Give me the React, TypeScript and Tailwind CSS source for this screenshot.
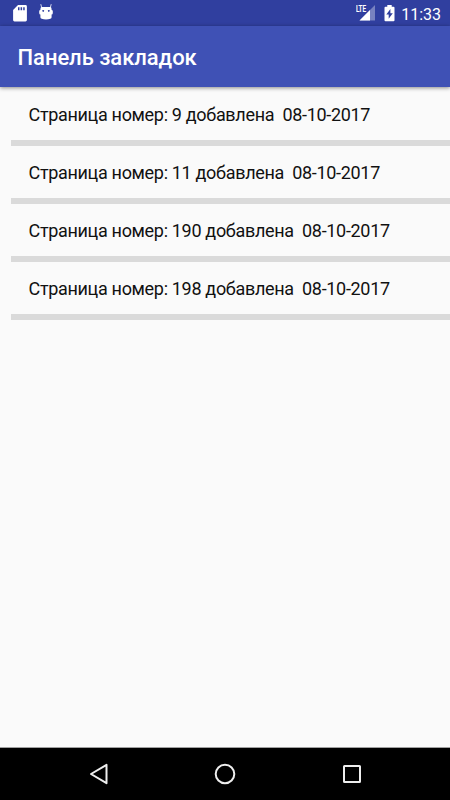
const bookmarks = [
  { page: 9, date: "08-10-2017" },
  { page: 11, date: "08-10-2017" },
  { page: 190, date: "08-10-2017" },
  { page: 198, date: "08-10-2017" },
];

function SdCardIcon() {
  return (
    <svg width="14" height="17" viewBox="0 0 14 17" fill="#fff">
      <path
        fillRule="evenodd"
        d="M5 0h7.5a1.4 1.4 0 0 1 1.4 1.4v13.7a1.4 1.4 0 0 1-1.4 1.4h-11A1.4 1.4 0 0 1 .1 15.1V5zM5 2.3v3h1.5v-3zm2.6 0v3h1.5v-3zm2.6 0v3h1.5v-3z"
      />
    </svg>
  );
}

function AndroidIcon() {
  return (
    <svg width="14" height="17" viewBox="0 0 14 17" fill="#fff" className="overflow-visible">
      <path d="M1.800 -.8l1 4M12.200 -.8l-1 4" stroke="#fff" strokeWidth="1" strokeOpacity=".8" />
      <path
        fillRule="evenodd"
        d="M3 2h8q1.600 0 1.600 2V5q1.200 0 1.200 1.200v1.800q0 1.500-1.200 1.500v2.800q0 1-1.300 1.500-2 .8-4.300.8t-4.300-.8Q1.400 13.300 1.400 12.300V9.500Q.2 9.500.2 8V6.200Q.2 5 1.400 5V4Q1.400 2 3 2zM4.200 4.900a.9.9 0 1 0 .01 0zM9.800 4.900a.9.9 0 1 0 .01 0z"
      />
    </svg>
  );
}

function SignalIcon() {
  return (
    <svg width="20" height="18" viewBox="0 0 20 18">
      <path d="M19 1v15.500H3.500z" fill="#fff" fillOpacity=".35" />
      <path d="M14 6v10.500H3.500z" fill="#fff" />
      <path d="M0 0h10.500v8.500H0z" fill="#303f9f" />
      <text
        x="0"
        y="7.800"
        fill="#fff"
        stroke="#fff"
        strokeWidth=".2"
        fontSize="9.500"
        fontWeight="500"
        textLength="10"
        lengthAdjust="spacingAndGlyphs"
      >
        LTE
      </text>
    </svg>
  );
}

function BatteryIcon() {
  return (
    <svg width="11" height="17" viewBox="0 0 11 17">
      <path d="M3.300 0h4.400v1.700h1.800q1 0 1 1v12.500q0 1-1 1h-8q-1 0-1-1V2.700q0-1 1-1h1.800z" fill="#fff" />
      <path d="M6.400 4L2.300 9.600h2.400v4.200L8.800 8.200H6.400z" fill="#303f9f" />
    </svg>
  );
}

function StatusBar() {
  return (
    <div className="flex h-[26px] shrink-0 items-start bg-[#303f9f] text-white">
      <div className="flex gap-3 pt-[5px] pl-[13px]">
        <SdCardIcon />
        <AndroidIcon />
      </div>
      <div className="ml-auto flex pr-[9px]">
        <div className="pt-[4px]">
          <SignalIcon />
        </div>
        <div className="ml-[8px] pt-[5px]">
          <BatteryIcon />
        </div>
        <span className="ml-[6px] pt-[5px] text-[16px] leading-5">11:33</span>
      </div>
    </div>
  );
}

function NavigationBar() {
  return (
    <div className="flex h-[53px] shrink-0 items-center justify-between border-t border-[#a0a0a0] bg-black px-[86px]">
      <svg width="24" height="24" viewBox="0 0 24 24" fill="none" stroke="#eee" strokeWidth="2">
        <path d="M20.500 2.800v18.400L5 12z" strokeLinejoin="round" />
      </svg>
      <svg width="24" height="24" viewBox="0 0 24 24" fill="none" stroke="#eee" strokeWidth="2">
        <circle cx="12" cy="12" r="9.300" />
      </svg>
      <svg width="24" height="24" viewBox="0 0 24 24" fill="none" stroke="#eee" strokeWidth="2">
        <rect x="4" y="4" width="16" height="16" rx=".5" />
      </svg>
    </div>
  );
}

export default function App() {
  return (
    <div className="flex h-screen flex-col bg-[#fafafa] font-[Roboto,sans-serif]">
      <StatusBar />
      <header className="flex h-[61px] shrink-0 items-center bg-[#3f51b5] pl-[17.500px] shadow-[0_1px_4px_rgba(0,0,0,0.45)]">
        <h1 className="pt-[2px] text-[22px] font-medium tracking-[-0.05px] text-white">Панель закладок</h1>
      </header>
      <ul className="flex-1 pl-[11px]">
        {bookmarks.map((bookmark, index) => (
          <li
            key={bookmark.page}
            className={`flex items-center border-b-6 border-[#dadada] pl-[17.500px] text-[18px] tracking-[-0.32px] whitespace-pre text-[#111] ${
              index === 0 ? "h-[59px] pt-px" : "h-[58px]"
            }`}
          >
            {`Страница номер: ${bookmark.page} добавлена  ${bookmark.date}`}
          </li>
        ))}
      </ul>
      <NavigationBar />
    </div>
  );
}
